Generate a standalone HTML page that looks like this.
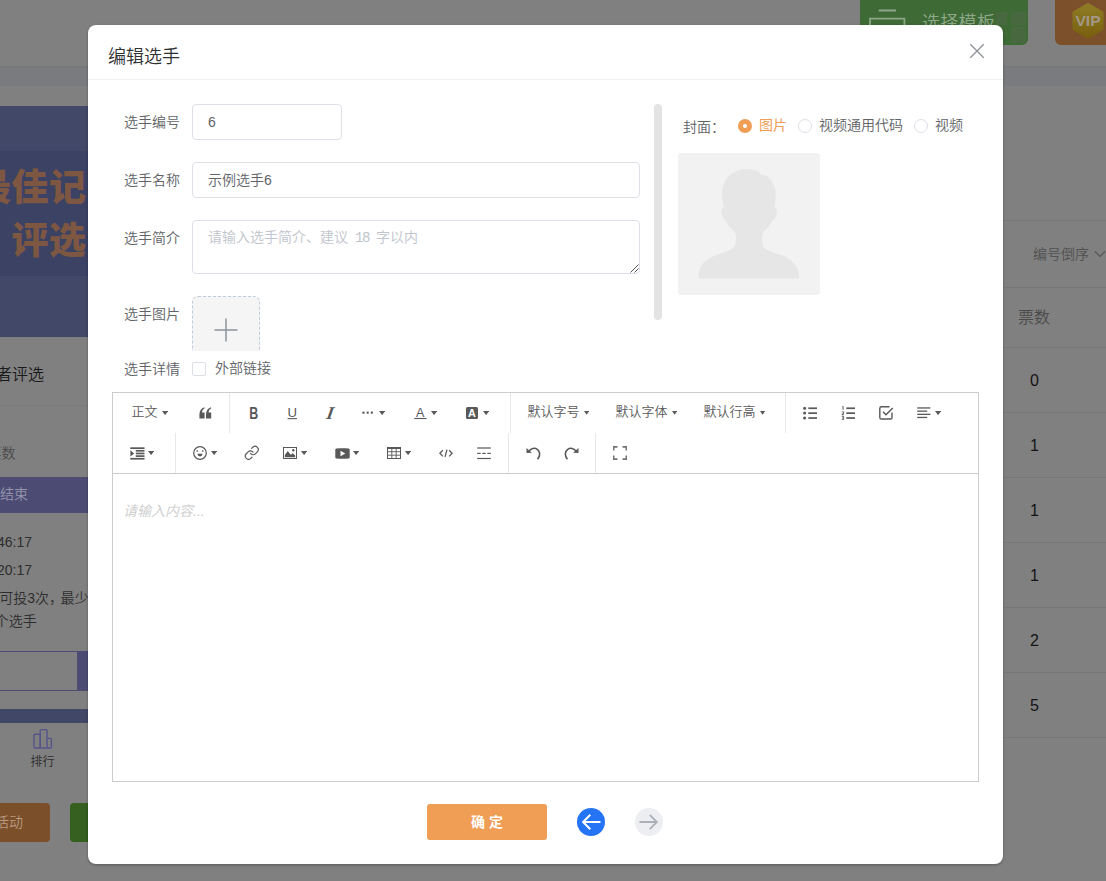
<!DOCTYPE html>
<html lang="zh-CN">
<head>
<meta charset="utf-8">
<title>编辑选手</title>
<style>
*{box-sizing:border-box;margin:0;padding:0}
html,body{width:1106px;height:881px;overflow:hidden}
body{position:relative;background:#808080;font-family:"Liberation Sans","Noto Sans CJK SC",sans-serif;font-size:14px;font-weight:350;color:#606266}
.abs{position:absolute}
/* ---------- dimmed background page ---------- */
.bg{position:absolute;left:0;top:0;width:1106px;height:881px;overflow:hidden}
.bg .topbar{left:0;top:0;width:1106px;height:66px;background:#808080}
.bg .band{left:0;top:66px;width:1106px;height:19.500px;background:linear-gradient(#767779,#7a7b7e 3px)}
.bg .hero{left:0;top:106px;width:100px;height:231px;background:#424867}
.bg .hero2{left:0;top:151px;width:100px;height:124.500px;background:#3b4264}
.bg .herotxt{color:#7e5743;font-weight:900;font-size:37px;line-height:1;white-space:nowrap;letter-spacing:0.500px}
.bg .t{white-space:nowrap;line-height:1}
.tbl-line{position:absolute;left:1003px;width:103px;height:1px;background:#777}
/* ---------- modal ---------- */
.modal{position:absolute;left:88px;top:25px;width:915px;height:839px;background:#fff;border-radius:8px;box-shadow:0 1px 3px rgba(0,0,0,.3)}
.modal .title{left:20px;top:20px;font-size:18px;line-height:24px;color:#303133;white-space:nowrap}
.modal .hline{left:0;top:54px;width:915px;height:1px;background:#eef0f4}
.lbl{position:absolute;width:92px;text-align:right;font-size:14px;line-height:20px;color:#606266;white-space:nowrap}
.inp{position:absolute;border:1px solid #dcdfe6;border-radius:4px;background:#fff;font-size:14px;color:#606266;line-height:34px;padding-left:15px;white-space:nowrap}
.ph{font-size:14px}
.mono{font-family:"Liberation Mono",monospace;font-size:14px;letter-spacing:-1.400px}
.rd{width:14px;height:14px;border:1px solid #dcdfe6;border-radius:50%;background:#fff}
.rd.on{border:none;background:#f09d55}
.rd.on::after{content:"";position:absolute;left:5px;top:5px;width:4px;height:4px;border-radius:50%;background:#fff}
.rt{font-size:14px;line-height:20px;color:#606266;white-space:nowrap}
.ed{position:absolute;left:24px;top:367px;width:867px;height:390px;box-shadow:inset 0 0 0 1px #ccc;background:#fff}
.tb{font-size:13px;line-height:18px;color:#595959;white-space:nowrap}
</style>
</head>
<body>
<div class="bg">
  <div class="abs topbar"></div>
  <div class="abs band"></div>
  <div class="abs hero"></div>
  <div class="abs hero2"></div>
  <div class="abs herotxt" style="right:1019.500px;top:170px">最佳记</div>
  <div class="abs herotxt" style="right:1019.500px;top:223px">评选</div>
  <div class="abs t" style="right:1062px;top:367px;font-size:16px;color:#1a1a1a">者评选</div>
  <div class="abs" style="left:0;top:405px;width:100px;height:1px;background:#7b7b7b"></div>
  <div class="abs t" style="right:1090.500px;top:446px;font-size:14px;color:#4a4a4a">票数</div>
  <div class="abs" style="left:0;top:477px;width:100px;height:35.600px;background:#4c4b73"></div>
  <div class="abs t" style="right:1078px;top:487px;font-size:14px;color:#9696ae">已结束</div>
  <div class="abs t" style="right:1074px;top:535px;font-size:14px;color:#2e2e2e">46:17</div>
  <div class="abs t" style="right:1074px;top:563px;font-size:14px;color:#2e2e2e">20:17</div>
  <div class="abs t" style="right:1017.500px;top:591px;font-size:14px;color:#2e2e2e">天可投3次<span style="letter-spacing:-2.500px">，</span>最少</div>
  <div class="abs t" style="right:1069.300px;top:614px;font-size:14px;color:#2e2e2e">个选手</div>
  <div class="abs" style="left:-10px;top:651px;width:110px;height:40px;background:#4c4b73"></div>
  <div class="abs" style="left:-10px;top:652px;width:87px;height:38px;background:#808080"></div>
  <div class="abs" style="left:0;top:709px;width:100px;height:14px;background:#414766"></div>
  <svg class="abs" style="left:32px;top:728px" width="22" height="22" viewBox="0 0 22 22" fill="none" stroke="#55548a" stroke-width="1.400" stroke-linejoin="round"><path d="M8.200 20V7.300Q8.200 6.300 7.200 6.300H3Q2 6.300 2 7.300V19Q2 20 3 20H18.400Q19.400 20 19.400 19V11.400Q19.400 10.400 18.400 10.400H15"/><path d="M8.200 20V2.600Q8.200 1.600 9.200 1.600H14Q15 1.600 15 2.600V20"/></svg>
  <div class="abs t" style="left:30.500px;top:756px;font-size:12px;color:#2b2b2b">排行</div>
  <div class="abs" style="left:-10px;top:803px;width:60px;height:39px;background:#7b4f29;border-radius:4px"></div>
  <div class="abs t" style="right:1083px;top:815px;font-size:14px;color:#b89a82">活动</div>
  <div class="abs" style="left:70px;top:803px;width:60px;height:39px;background:#35601f;border-radius:4px"></div>

  <!-- top right buttons -->
  <div class="abs" style="left:860px;top:-10px;width:168px;height:55px;background:#3e6a35;border-radius:6px"></div>
  <svg class="abs" style="left:866px;top:8px" width="42" height="30" viewBox="0 0 42 30" fill="none" stroke="#8da687" stroke-width="1.800"><path d="M12.700 2.500h17.300M4 28V10.700h34.400V28"/></svg>
  <div class="abs t" style="left:922px;top:14px;font-size:18px;color:#8fa88a;letter-spacing:.3px">选择模板</div>
  <div class="abs" style="left:996px;top:12px;width:11px;height:13px;background:#48693f"></div>
  <div class="abs" style="left:1011px;top:12px;width:14.500px;height:13px;background:#48693f"></div>
  <div class="abs" style="left:1011px;top:27px;width:14.500px;height:15.500px;background:#48693f"></div>
  <div class="abs" style="left:1055px;top:-10px;width:60px;height:55px;background:#7b502b;border-radius:6px"></div>
  <svg class="abs" style="left:1070px;top:1px" width="36" height="40" viewBox="0 0 36 40"><defs><linearGradient id="hx" x1="0" y1="0" x2="0" y2="1"><stop offset="0" stop-color="#8e7c24"/><stop offset="1" stop-color="#79600f"/></linearGradient></defs><path d="M18 3.500L32.100 11.650V27.950L18 36.100L3.900 27.950V11.650z" fill="url(#hx)" stroke="url(#hx)" stroke-width="3" stroke-linejoin="round"/><text x="18" y="25.400" text-anchor="middle" font-family="Liberation Sans, sans-serif" font-weight="700" font-size="15.500" fill="#a39886">VIP</text></svg>

  <!-- right table -->
  <div class="tbl-line" style="top:220px"></div>
  <div class="abs t" style="left:1033px;top:247px;font-size:14px;color:#505050">编号倒序</div>
  <svg class="abs" style="left:1094px;top:250px" width="12" height="8" viewBox="0 0 12 8" fill="none" stroke="#555" stroke-width="1.1"><path d="M1 1.500l5 5 5-5"/></svg>
  <div class="tbl-line" style="top:287px"></div>
  <div class="abs t" style="left:1018px;top:310px;font-size:16px;color:#4a4a4a">票数</div>
  <div class="tbl-line" style="top:347px"></div>
  <div class="abs t" style="left:1030px;top:373px;font-size:16px;color:#141414">0</div>
  <div class="tbl-line" style="top:412px"></div>
  <div class="abs t" style="left:1030px;top:438px;font-size:16px;color:#141414">1</div>
  <div class="tbl-line" style="top:477px"></div>
  <div class="abs t" style="left:1030px;top:503px;font-size:16px;color:#141414">1</div>
  <div class="tbl-line" style="top:542px"></div>
  <div class="abs t" style="left:1030px;top:568px;font-size:16px;color:#141414">1</div>
  <div class="tbl-line" style="top:607px"></div>
  <div class="abs t" style="left:1030px;top:633px;font-size:16px;color:#141414">2</div>
  <div class="tbl-line" style="top:672px"></div>
  <div class="abs t" style="left:1030px;top:698px;font-size:16px;color:#141414">5</div>
  <div class="tbl-line" style="top:737px"></div>
</div>

<div class="modal">
  <div class="abs title">编辑选手</div>
  <div class="abs hline"></div>

  <div class="lbl" style="left:0;top:87px">选手编号</div>
  <div class="inp" style="left:104px;top:79px;width:150px;height:36px">6</div>
  <div class="lbl" style="left:0;top:145px">选手名称</div>
  <div class="inp" style="left:104px;top:137px;width:448px;height:36px">示例选手6</div>
  <div class="lbl" style="left:0;top:203px">选手简介</div>
  <div class="lbl" style="left:0;top:279px">选手图片</div>
  <div class="lbl" style="left:0;top:334px">选手详情</div>

  <!-- textarea -->
  <div class="inp" style="left:104px;top:195px;width:448px;height:54px;line-height:20px;padding-top:6px;color:#c0c4cc"><span class="ph">请输入选手简介、建议<span class="mono">&nbsp;18&nbsp;</span>字以内</span></div>
  <svg class="abs" style="left:541.500px;top:238.500px" width="9" height="9" viewBox="0 0 9 9" stroke="#555" stroke-width="1" fill="none"><path d="M0.500 8.500l8-8M4.500 8.500l4-4"/></svg>
  <!-- upload -->
  <div class="abs" style="left:104px;top:271px;width:68px;height:54.500px;overflow:hidden"><div style="width:68px;height:68px;border:1px dashed #c0ccda;border-radius:6px;background:#f5f5f5"></div></div>
  <svg class="abs" style="left:125px;top:292px" width="26" height="26" viewBox="0 0 26 26" stroke="#8c939d" stroke-width="1.500" fill="none"><path d="M13 1.500v23M1.500 13h23"/></svg>
  <!-- scrollbar -->
  <div class="abs" style="left:566px;top:79px;width:8px;height:216px;border-radius:4px;background:#e3e3e3"></div>
  <!-- checkbox -->
  <div class="abs" style="left:104px;top:337px;width:14px;height:14px;border:1px solid #dcdfe6;border-radius:2px;background:#fff"></div>
  <div class="abs" style="left:127px;top:333px;font-size:14px;line-height:20px;color:#606266;white-space:nowrap">外部链接</div>

  <!-- cover -->
  <div class="abs" style="left:595px;top:92px;font-size:14px;line-height:20px;color:#606266;white-space:nowrap">封面：</div>
  <div class="abs rd on" style="left:650px;top:94px"></div>
  <div class="abs rt" style="left:671px;top:90px;color:#f09d55;font-weight:400">图片</div>
  <div class="abs rd" style="left:710px;top:94px"></div>
  <div class="abs rt" style="left:731px;top:90px">视频通用代码</div>
  <div class="abs rd" style="left:826px;top:94px"></div>
  <div class="abs rt" style="left:847px;top:90px">视频</div>
  <svg class="abs" style="left:590px;top:128px" width="142" height="142" viewBox="0 0 142 142"><rect width="142" height="142" rx="3" fill="#f2f2f2"/><path fill="#e6e6e6" d="M20.6 125.4C20.8 123.8 20.6 119.0 21.8 116.1C22.9 113.2 24.8 110.3 27.4 108.0C30.0 105.7 33.6 103.9 37.1 102.400C40.6 100.8 45.3 100.0 48.4 98.6C51.4 97.3 54.1 95.7 55.6 94.3C57.1 92.9 57.2 92.500 57.500 90.3C57.9 88.0 58.500 83.3 57.500 80.6C56.500 77.9 53.2 76.3 51.6 74.1C50.0 72.0 49.0 69.0 48.0 67.7C47.1 66.4 46.7 67.2 45.9 66.1C45.2 65.0 43.9 62.9 43.500 61.3C43.2 59.6 43.500 57.6 43.8 56.4C44.2 55.2 45.500 55.9 45.6 54.0C45.7 52.1 44.500 48.0 44.3 45.1C44.1 42.3 43.7 40.3 44.3 37.1C45.0 33.8 46.3 28.7 48.4 25.8C50.4 22.8 52.9 21.0 56.4 19.3C59.9 17.7 65.500 16.3 69.3 16.1C73.1 15.9 76.7 17.2 79.0 18.1C81.3 18.9 81.1 20.4 83.0 21.4C84.9 22.500 88.1 22.4 90.3 24.2C92.4 26.0 94.6 29.3 95.9 32.2C97.2 35.2 97.7 38.3 97.8 41.9C98.0 45.500 96.6 51.6 96.7 54.0C96.8 56.4 98.0 55.2 98.3 56.4C98.6 57.6 98.9 59.7 98.6 61.3C98.4 62.8 97.4 64.7 96.7 65.8C96.0 66.8 95.4 66.3 94.3 67.7C93.2 69.1 91.9 72.0 90.3 74.1C88.7 76.3 85.6 77.6 84.6 80.6C83.7 83.500 84.1 89.3 84.6 91.9C85.2 94.4 85.8 94.6 87.8 95.9C89.9 97.2 93.4 98.6 96.7 99.9C100.1 101.3 104.8 102.2 108.0 104.0C111.2 105.7 114.0 108.1 116.1 110.4C118.1 112.7 119.2 115.2 120.1 117.7C120.9 120.2 121.0 124.1 121.2 125.4Z"/></svg>
<div class="ed">
<div class="abs tb" style="left:19.5px;top:11px">正文</div>
<svg class="abs" style="left:49.9px;top:19.1px" width="6.2" height="4.1" viewBox="0 0 6.2 4.1"><path d="M0 0h6.2L3.1 4.1z" fill="#595959"/></svg>
<svg class="abs" style="left:86.500px;top:15px" width="13" height="12" viewBox="0 0 13 12" fill="#595959"><path d="M0.400 11.400V7.600C0.400 3.800 2.300 1.100 5.400 0.300L5.700 1.300C4 2.100 3.100 3.500 3 5.600H5.600V11.400zM7 11.400V7.600C7 3.800 8.900 1.100 12 0.300L12.300 1.300C10.600 2.100 9.700 3.500 9.600 5.600H12.200V11.400z"/></svg>
<div class="abs" style="left:117px;top:1px;width:1px;height:40px;background:#e8e8e8"></div>
<svg class="abs" style="left:137px;top:14px" width="10" height="14" viewBox="0 0 10 14"><text x="0.300" y="12.700" font-family="Liberation Sans, sans-serif" font-weight="700" font-size="15.800" fill="#595959" textLength="9" lengthAdjust="spacingAndGlyphs">B</text></svg>
<svg class="abs" style="left:175px;top:14px" width="11" height="14" viewBox="0 0 11 14"><text x="5.300" y="10.600" text-anchor="middle" font-family="Liberation Sans, sans-serif" font-size="13.200" fill="#595959">U</text><rect x="0.600" y="12.100" width="9.400" height="1.100" fill="#595959"/></svg>
<svg class="abs" style="left:209px;top:12px" width="18" height="18" viewBox="0 0 18 18"><text x="9" y="15" text-anchor="middle" font-family="Liberation Serif, serif" font-style="italic" font-weight="700" font-size="17.800" fill="#595959" transform="translate(1.900 0.300) skewX(-10)">I</text></svg>
<svg class="abs" style="left:250px;top:19px" width="12" height="4" viewBox="0 0 12 4" fill="#595959"><rect x="0.400" y="0.600" width="2.100" height="2.100"/><rect x="4.600" y="0.600" width="2.100" height="2.100"/><rect x="8.800" y="0.600" width="2.100" height="2.100"/></svg>
<svg class="abs" style="left:266.9px;top:19.1px" width="6.2" height="4.1" viewBox="0 0 6.2 4.1"><path d="M0 0h6.2L3.1 4.1z" fill="#595959"/></svg>
<svg class="abs" style="left:302px;top:14px" width="13" height="14" viewBox="0 0 13 14"><text x="6.300" y="10.900" text-anchor="middle" font-family="Liberation Sans, sans-serif" font-size="12.600" fill="#595959">A</text><rect x="0.200" y="11.950" width="12.400" height="1.100" fill="#595959"/></svg>
<svg class="abs" style="left:318.9px;top:19.1px" width="6.2" height="4.1" viewBox="0 0 6.2 4.1"><path d="M0 0h6.2L3.1 4.1z" fill="#595959"/></svg>
<svg class="abs" style="left:354px;top:15px" width="12" height="12" viewBox="0 0 12 12"><rect width="12" height="12" rx="1.500" fill="#595959"/><text x="6" y="9.700" text-anchor="middle" font-family="Liberation Sans, sans-serif" font-weight="700" font-size="10.800" fill="#fff">A</text></svg>
<svg class="abs" style="left:370.9px;top:19.1px" width="6.2" height="4.1" viewBox="0 0 6.2 4.1"><path d="M0 0h6.2L3.1 4.1z" fill="#595959"/></svg>
<div class="abs" style="left:398px;top:1px;width:1px;height:40px;background:#e8e8e8"></div>
<div class="abs tb" style="left:415.5px;top:11px">默认字号</div>
<svg class="abs" style="left:472.3px;top:18.8px" width="5.2" height="3.8" viewBox="0 0 5.2 3.8"><path d="M0 0h5.2L2.6 3.800z" fill="#595959"/></svg>
<div class="abs tb" style="left:503.5px;top:11px">默认字体</div>
<svg class="abs" style="left:560.0px;top:18.8px" width="5.2" height="3.8" viewBox="0 0 5.2 3.8"><path d="M0 0h5.2L2.6 3.800z" fill="#595959"/></svg>
<div class="abs tb" style="left:591.4px;top:11px">默认行高</div>
<svg class="abs" style="left:648.4px;top:18.8px" width="5.2" height="3.8" viewBox="0 0 5.2 3.8"><path d="M0 0h5.2L2.6 3.800z" fill="#595959"/></svg>
<div class="abs" style="left:673px;top:1px;width:1px;height:40px;background:#e8e8e8"></div>
<svg class="abs" style="left:691px;top:14px" width="14" height="14" viewBox="0 0 14 14" fill="#595959"><circle cx="1.600" cy="2.200" r="1.500"/><circle cx="1.600" cy="7.100" r="1.500"/><circle cx="1.600" cy="12" r="1.500"/><rect x="5.300" y="1.400" width="8.700" height="1.700"/><rect x="5.300" y="6.300" width="8.700" height="1.700"/><rect x="5.300" y="11.200" width="8.700" height="1.700"/></svg>
<svg class="abs" style="left:729px;top:14px" width="14" height="14" viewBox="0 0 14 14" fill="#595959"><rect x="5.300" y="1.400" width="8.700" height="1.700"/><rect x="5.300" y="6.300" width="8.700" height="1.700"/><rect x="5.300" y="11.200" width="8.700" height="1.700"/><path d="M1.300 0.300h1.300v3.400H1.600V1.100H0.900zM0.700 5.400h2.400v2l-1.400 1h1.400v0.800H0.700V8.100l1.600-1.200V6.200H0.700zM0.700 10.300h2.400v3.400H0.700v-0.800h1.600v-0.500H1.200v-0.800h1.100v-0.500H0.700z"/></svg>
<svg class="abs" style="left:767px;top:14px" width="15" height="14" viewBox="0 0 15 14" fill="none" stroke="#595959" stroke-width="1.400"><path d="M10.500 0.800H2.400C1.500 0.800 0.800 1.500 0.800 2.400V11.400C0.800 12.300 1.500 13 2.400 13H11.400C12.300 13 13 12.300 13 11.400V6.500"/><path d="M4 5.800L7 8.800L13.800 2"/></svg>
<svg class="abs" style="left:805px;top:15px" width="14" height="12" viewBox="0 0 14 12" fill="#595959"><rect x="0.200" y="0.300" width="13.200" height="1.300"/><rect x="0.200" y="3.500" width="10" height="1.300"/><rect x="0.200" y="6.700" width="13.200" height="1.300"/><rect x="0.200" y="9.800" width="10" height="1.300"/></svg>
<svg class="abs" style="left:822.6px;top:18.8px" width="6.2" height="4.1" viewBox="0 0 6.2 4.1"><path d="M0 0h6.2L3.1 4.1z" fill="#595959"/></svg>
<svg class="abs" style="left:17.500px;top:54.500px" width="15" height="13" viewBox="0 0 15 13" fill="#595959"><rect x="0.300" y="0.300" width="14.200" height="1.700"/><rect x="5.800" y="2.950" width="8.700" height="1.700"/><rect x="5.800" y="5.600" width="8.700" height="1.700"/><rect x="5.800" y="8.250" width="8.700" height="1.700"/><rect x="0.300" y="10.900" width="14.200" height="1.700"/><path d="M0.400 3.300L4.200 6.400L0.400 9.600z"/></svg>
<svg class="abs" style="left:35.9px;top:58.9px" width="6.2" height="4.1" viewBox="0 0 6.2 4.1"><path d="M0 0h6.2L3.1 4.1z" fill="#595959"/></svg>
<div class="abs" style="left:63px;top:41px;width:1px;height:40px;background:#e8e8e8"></div>
<svg class="abs" style="left:81px;top:54px" width="14" height="14" viewBox="0 0 14 14"><circle cx="7" cy="7" r="6.300" fill="none" stroke="#595959" stroke-width="1.200"/><circle cx="4.300" cy="5" r="0.850" fill="#595959"/><circle cx="9.700" cy="5" r="0.850" fill="#595959"/><path d="M4.500 7.700H9.500C9.500 9.300 8.400 10.300 7 10.300S4.500 9.300 4.500 7.700z" fill="#595959"/></svg>
<svg class="abs" style="left:98.9px;top:58.9px" width="6.2" height="4.1" viewBox="0 0 6.2 4.1"><path d="M0 0h6.2L3.1 4.1z" fill="#595959"/></svg>
<svg class="abs" style="left:132.200px;top:53.200px" width="15.600" height="15.600" viewBox="0 0 24 24" fill="none" stroke="#595959" stroke-width="1.800" stroke-linecap="round" stroke-linejoin="round"><path d="M10 13a5 5 0 0 0 7.540.540l3-3a5 5 0 0 0-7.070-7.070l-1.720 1.710"/><path d="M14 11a5 5 0 0 0-7.540-.540l-3 3a5 5 0 0 0 7.070 7.070l1.710-1.710"/></svg>
<svg class="abs" style="left:171px;top:55px" width="14" height="12" viewBox="0 0 14 12"><rect x="0.500" y="0.500" width="13" height="11" fill="none" stroke="#595959" stroke-width="1"/><path d="M1.800 10.300V8L4.800 4.100L7.800 7.700L9.800 6.200L12.200 8.400V10.300z" fill="#595959"/><circle cx="10.300" cy="3.300" r="1.200" fill="#595959"/></svg>
<svg class="abs" style="left:188.9px;top:58.9px" width="6.2" height="4.1" viewBox="0 0 6.2 4.1"><path d="M0 0h6.2L3.1 4.1z" fill="#595959"/></svg>
<svg class="abs" style="left:222.500px;top:55.500px" width="15" height="11" viewBox="0 0 15 11"><path d="M0.300 1.700C0.300 1 0.900 0.400 1.600 0.400C5.500 0.100 9.500 0.100 13.400 0.400C14.100 0.400 14.700 1 14.700 1.700V9.300C14.700 10 14.100 10.600 13.400 10.600C9.500 10.900 5.500 10.900 1.600 10.600C0.900 10.600 0.300 10 0.300 9.300z" fill="#595959"/><path d="M5.500 2.800L10.300 5.500L5.500 8.200z" fill="#fff"/></svg>
<svg class="abs" style="left:240.9px;top:58.9px" width="6.2" height="4.1" viewBox="0 0 6.2 4.1"><path d="M0 0h6.2L3.1 4.1z" fill="#595959"/></svg>
<svg class="abs" style="left:275px;top:55px" width="14" height="12" viewBox="0 0 14 12" fill="none" stroke="#595959"><rect x="0.500" y="0.500" width="13" height="11" stroke-width="1"/><path d="M0.500 1.200H13.500" stroke-width="1.600"/><path d="M0.500 4.700H13.500M0.500 8.200H13.500M4.800 1V11.500M9.200 1V11.500" stroke-width="0.900"/></svg>
<svg class="abs" style="left:292.9px;top:58.9px" width="6.2" height="4.1" viewBox="0 0 6.2 4.1"><path d="M0 0h6.2L3.1 4.1z" fill="#595959"/></svg>
<svg class="abs" style="left:327px;top:57px" width="14" height="9" viewBox="0 0 14 9" fill="none" stroke="#595959" stroke-width="1.300"><path d="M3.800 1.200L0.900 4.300L3.800 7.400M10.200 1.200L13.100 4.300L10.200 7.400M8 0.700L6 7.900"/></svg>
<svg class="abs" style="left:365px;top:54.500px" width="14" height="13" viewBox="0 0 14 13" fill="#595959"><rect x="0.200" y="0.400" width="13.600" height="1.200"/><rect x="0.200" y="5.800" width="3.400" height="1.200"/><rect x="5.300" y="5.800" width="3.400" height="1.200"/><rect x="10.400" y="5.800" width="3.400" height="1.200"/><rect x="0.200" y="10.900" width="13.600" height="1.200"/></svg>
<div class="abs" style="left:396px;top:41px;width:1px;height:40px;background:#e8e8e8"></div>
<svg class="abs" style="left:413.500px;top:54.500px" width="15" height="13" viewBox="0 0 15 13"><path d="M3.200 4C5 1.600 8.500 0.300 11.300 2.300C14.200 4.400 14.600 8.600 11.600 12.200" fill="none" stroke="#595959" stroke-width="1.600"/><path d="M0.500 0.900L5.900 5.700L0.500 5.900z" fill="#595959"/></svg>
<svg class="abs" style="left:451.500px;top:54.500px" width="15" height="13" viewBox="0 0 15 13"><path d="M11.800 4C10 1.600 6.500 0.300 3.700 2.300C0.800 4.400 0.400 8.600 3.400 12.200" fill="none" stroke="#595959" stroke-width="1.600"/><path d="M14.500 0.900L9.100 5.700L14.500 5.900z" fill="#595959"/></svg>
<div class="abs" style="left:483px;top:41px;width:1px;height:40px;background:#e8e8e8"></div>
<svg class="abs" style="left:501px;top:54px" width="14" height="14" viewBox="0 0 14 14" fill="none" stroke="#747474" stroke-width="1.600"><path d="M0.700 4.600V0.900H4.500M9.500 0.900H13.300V4.600M13.300 9.400V13.100H9.500M4.500 13.100H0.700V9.400"/></svg>
<div class="abs" style="left:1px;top:81px;width:865px;height:1px;background:#ccc"></div>
<div class="abs" style="left:11px;top:109px;font-size:14px;line-height:20px;font-style:italic;color:#ccc;white-space:nowrap">请输入内容...</div>
</div>
<div class="abs" style="left:339px;top:779px;width:120px;height:36px;border-radius:3px;background:#f09d55;color:#fff;font-size:14px;font-weight:700;line-height:36px;text-align:center;letter-spacing:0">确 定</div>
<svg class="abs" style="left:489px;top:783px" width="28" height="28" viewBox="0 0 28 28"><circle cx="14" cy="14" r="14" fill="#2474f5"/><path d="M23.500 14H6.500M13.300 6.800L6.100 14L13.300 21.200" fill="none" stroke="#fff" stroke-width="2"/></svg>
<svg class="abs" style="left:547px;top:783px" width="28" height="28" viewBox="0 0 28 28"><circle cx="14" cy="14" r="14" fill="#edeef2"/><path d="M4.500 14H22M14.700 6.800L21.900 14L14.700 21.200" fill="none" stroke="#adb0b9" stroke-width="1.800"/></svg>
<svg class="abs" style="left:881px;top:18px" width="16" height="16" viewBox="0 0 16 16" fill="none" stroke="#8e9097" stroke-width="1.300"><path d="M1.300 1.300L14.700 14.700M14.700 1.300L1.300 14.700"/></svg>
</div>
</body>
</html>
